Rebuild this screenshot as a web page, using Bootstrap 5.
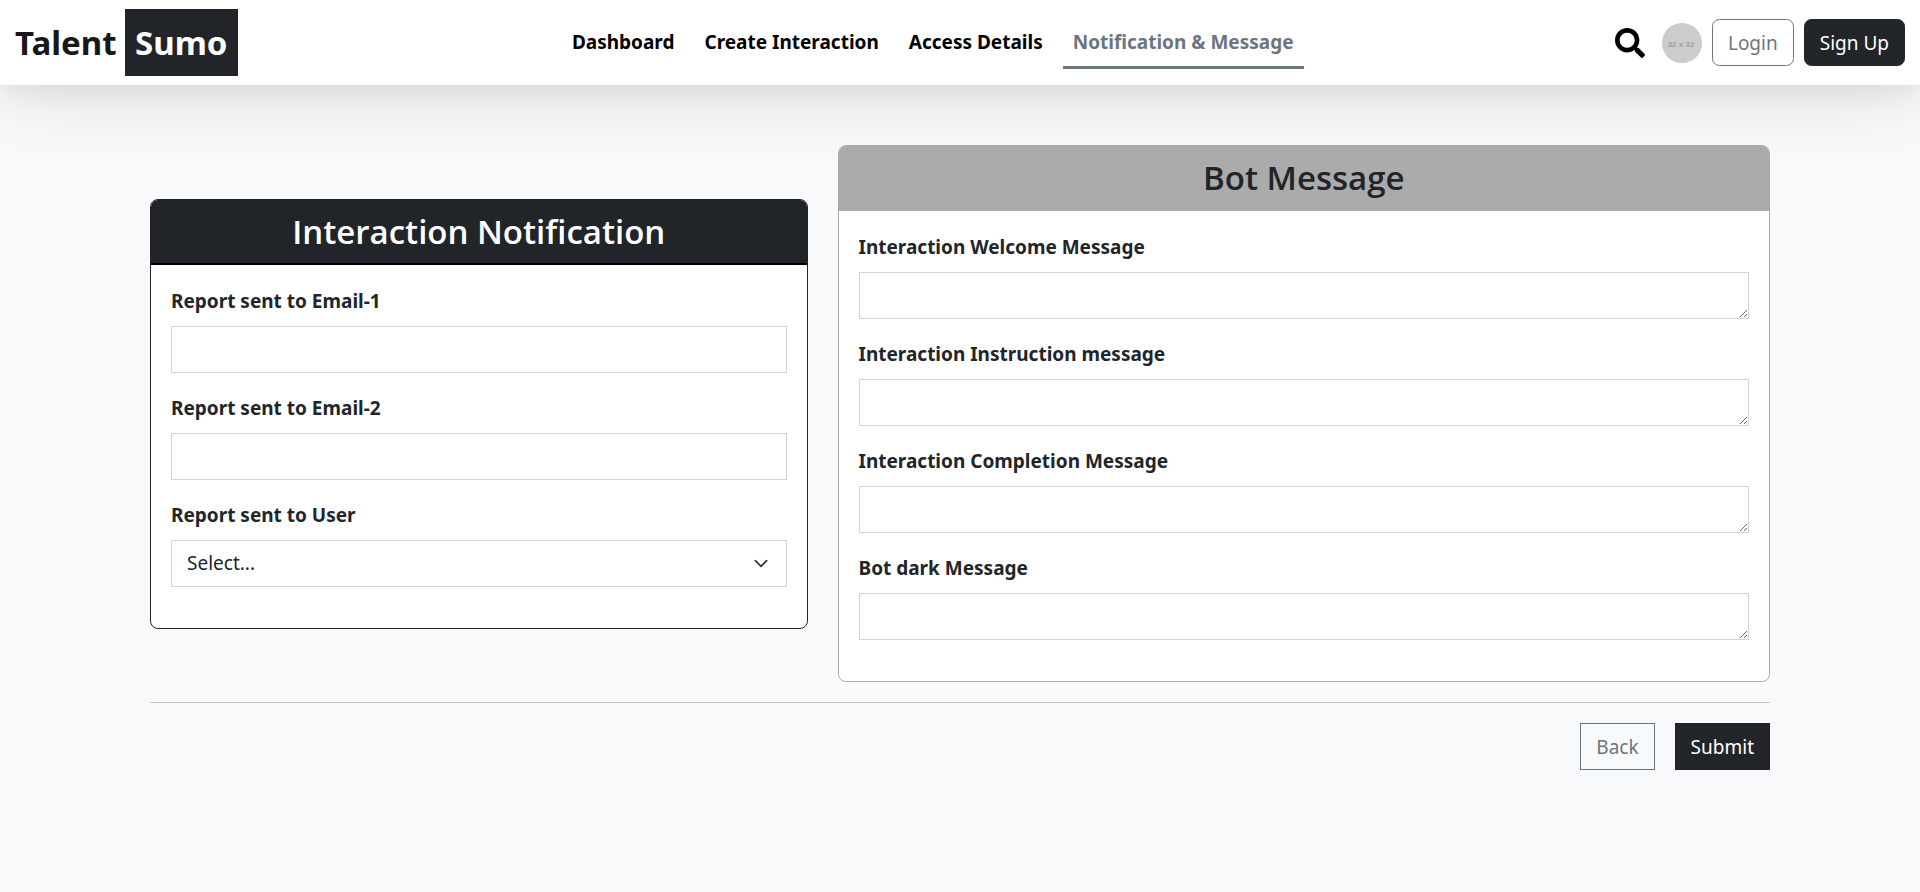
<!DOCTYPE html>
<html lang="en">
<head>
<meta charset="utf-8">
<meta name="viewport" content="width=device-width, initial-scale=1">
<title>Talent Sumo - Notification &amp; Message</title>
<link href="https://cdn.jsdelivr.net/npm/bootstrap@5.3.0/dist/css/bootstrap.min.css" rel="stylesheet">
<style>
  :root { font-size: 20px; }
  body {
    font-family: "Noto Sans", "Open Sans", sans-serif;
    font-size: 19px;
    line-height: 30px;
  }
  .site-bar {
    padding: 9px 0;
    z-index: 1020;
    box-shadow: 0 5px 24px rgba(0, 0, 0, .06), 0 8px 70px rgba(0, 0, 0, .12);
  }
  .site-bar .navbar-brand {
    padding: 0;
    font-size: 33px;
    font-weight: 700;
    line-height: 47px;
    color: #16181b;
  }
  .brand-tile { display: inline-block; padding: 10px; }
  .site-bar .nav-link {
    padding: 11px 10px 9px;
    border-bottom: 3px solid transparent;
    color: #000;
    font-weight: 700;
  }
  .site-bar .nav-link.active { color: #6c757d; border-bottom-color: #6c757d; }
  .search-btn { padding: 7px; line-height: 0; }
  .btn { --bs-btn-font-size: 19px; --bs-btn-line-height: 30px; }
  .form-control, .form-select { font-size: 19px; line-height: 30px; border-color: #ced4da; }
  .form-select { background-size: 20px 15px; }
  textarea.form-control { min-height: 47px; }
  .form-label { font-weight: 700; }
  .page-wrap { max-width: 1650px; padding-top: 60px; }
  .panel { --bs-card-border-radius: 8px; --bs-card-inner-border-radius: 7px; }
  .panel .card-header { padding: 9px 20px 8px; }
  .panel .card-header h2 {
    font-family: "Open Sans", "Noto Sans", sans-serif;
    font-size: 33px;
    line-height: 46px;
    font-weight: 600;
  }
  .panel .card-body { padding-top: 21px; padding-bottom: 21px; }
  .panel-dark { --bs-card-border-color: #212529; }
  .panel-dark .card-header { border-bottom: 2px solid #000; }
  .panel-gray { --bs-card-border-color: #ababab; }
  .panel-gray .card-header { background-color: #ababab; border-bottom: 2px solid #ababab; }
</style>
</head>
<body class="bg-light">
<nav class="navbar navbar-expand-lg bg-white sticky-top site-bar">
  <div class="container-fluid">
    <a class="navbar-brand" href="#">Talent <span class="brand-tile bg-dark text-white">Sumo</span></a>
    <button class="navbar-toggler" type="button" data-bs-toggle="collapse" data-bs-target="#mainNav" aria-controls="mainNav" aria-expanded="false" aria-label="Toggle navigation">
      <span class="navbar-toggler-icon"></span>
    </button>
    <div class="collapse navbar-collapse" id="mainNav">
      <ul class="navbar-nav mx-auto column-gap-2">
        <li class="nav-item"><a class="nav-link" href="#">Dashboard</a></li>
        <li class="nav-item"><a class="nav-link" href="#">Create Interaction</a></li>
        <li class="nav-item"><a class="nav-link" href="#">Access Details</a></li>
        <li class="nav-item"><a class="nav-link active" aria-current="page" href="#">Notification &amp; Message</a></li>
      </ul>
      <div class="d-flex align-items-center gap-2">
        <button class="btn border-0 search-btn" type="button" aria-label="Search">
          <svg width="30" height="30" viewBox="0 0 512 512" fill="#000" aria-hidden="true"><path d="M505 442.700L405.300 343c-4.500-4.500-10.600-7-17-7H372c27.600-35.300 44-79.700 44-128C416 93.100 322.900 0 208 0S0 93.100 0 208s93.100 208 208 208c48.300 0 92.700-16.400 128-44v16.300c0 6.400 2.500 12.500 7 17l99.700 99.700c9.400 9.400 24.600 9.400 33.900 0l28.300-28.300c9.400-9.400 9.400-24.600.1-34zM208 336c-70.700 0-128-57.200-128-128 0-70.700 57.200-128 128-128 70.700 0 128 57.200 128 128 0 70.700-57.200 128-128 128z"/></svg>
        </button>
        <svg class="flex-shrink-0" width="40" height="40" viewBox="0 0 40 40" role="img" aria-label="User avatar">
          <circle cx="20" cy="20" r="20" fill="#ccc"/>
          <text x="19" y="24" text-anchor="middle" font-family="Liberation Sans, sans-serif" font-size="8" font-weight="700" fill="#a0a0a0">32 x 32</text>
        </svg>
        <button class="btn btn-outline-secondary" type="button">Login</button>
        <button class="btn btn-dark" type="button">Sign Up</button>
      </div>
    </div>
  </div>
</nav>

<main class="container-fluid page-wrap">
  <form>
    <div class="row align-items-center">
      <div class="col-lg-5">
        <section class="card panel panel-dark">
          <div class="card-header text-center text-bg-dark"><h2 class="mb-0">Interaction Notification</h2></div>
          <div class="card-body">
            <div class="mb-3">
              <label class="form-label" for="email1">Report sent to Email-1</label>
              <input class="form-control rounded-0" type="email" id="email1">
            </div>
            <div class="mb-3">
              <label class="form-label" for="email2">Report sent to Email-2</label>
              <input class="form-control rounded-0" type="email" id="email2">
            </div>
            <div class="mb-3">
              <label class="form-label" for="reportUser">Report sent to User</label>
              <select class="form-select rounded-0" id="reportUser"><option selected>Select...</option></select>
            </div>
          </div>
        </section>
      </div>
      <div class="col-lg-7">
        <section class="card panel panel-gray">
          <div class="card-header text-center"><h2 class="mb-0">Bot Message</h2></div>
          <div class="card-body">
            <div class="mb-3">
              <label class="form-label" for="welcomeMsg">Interaction Welcome Message</label>
              <textarea class="form-control rounded-0" id="welcomeMsg" rows="1"></textarea>
            </div>
            <div class="mb-3">
              <label class="form-label" for="instructionMsg">Interaction Instruction message</label>
              <textarea class="form-control rounded-0" id="instructionMsg" rows="1"></textarea>
            </div>
            <div class="mb-3">
              <label class="form-label" for="completionMsg">Interaction Completion Message</label>
              <textarea class="form-control rounded-0" id="completionMsg" rows="1"></textarea>
            </div>
            <div class="mb-3">
              <label class="form-label" for="darkMsg">Bot dark Message</label>
              <textarea class="form-control rounded-0" id="darkMsg" rows="1"></textarea>
            </div>
          </div>
        </section>
      </div>
    </div>
    <hr>
    <div class="d-flex justify-content-end gap-3">
      <button class="btn btn-outline-secondary rounded-0" type="button">Back</button>
      <button class="btn btn-dark rounded-0" type="submit">Submit</button>
    </div>
  </form>
</main>
<script src="https://cdn.jsdelivr.net/npm/bootstrap@5.3.0/dist/js/bootstrap.bundle.min.js"></script>
</body>
</html>
